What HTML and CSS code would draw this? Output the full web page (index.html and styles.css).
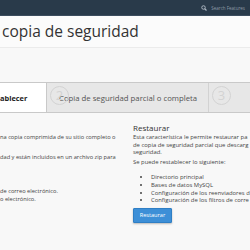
FILE: index.html
```html
<!DOCTYPE html>
<html lang="es">

<head>
    <title>Copia de seguridad</title>
    <meta charset="UTF-8">
    <link rel="stylesheet" href="styles.css">
</head>

<body>
    <div class="cp-top">
        <div class="cp-search">
            <svg width="6" height="6" viewBox="0 0 12 12">
                <circle cx="5" cy="5" r="3.5" fill="none" stroke="#a9b4bf" stroke-width="2" />
                <line x1="7.5" y1="7.5" x2="11" y2="11" stroke="#a9b4bf" stroke-width="2.4" />
            </svg>
            <span>Search Features</span>
        </div>
    </div>

    <div class="cp-title">
        <h1>copia de seguridad</h1>
    </div>

    <div class="cp-steps">
        <div class="cp-step cp-step-active">ablecer</div>
        <div class="cp-step cp-step-2">
            <span class="cp-num">2</span>
            Copia de seguridad parcial o completa
        </div>
        <div class="cp-step cp-step-3">
            <span class="cp-num">3</span>
        </div>
    </div>

    <div class="cp-content">
        <div class="cp-col cp-left">
            <p class="cp-l1">na copia comprimida de su sitio completo o</p>
            <p class="cp-l2">dad y están incluidos en un archivo zip para</p>
            <p class="cp-l3">de correo electrónico.<br>o electrónico.</p>
        </div>
        <div class="cp-col cp-right">
            <h2>Restaurar</h2>
            <p>Esta característica le permite restaurar pa<br>de copia de seguridad parcial que descarg<br>seguridad.</p>
            <p>Se puede restablecer lo siguiente:</p>
            <ul>
                <li>Directorio principal</li>
                <li>Bases de datos MySQL</li>
                <li>Configuración de los reenviadores d</li>
                <li>Configuración de los filtros de corre</li>
            </ul>
            <button class="cp-btn">Restaurar</button>
        </div>
    </div>
</body>

</html>
```

FILE: styles.css
```css
* {
    box-sizing: border-box;
    font-family: 'Open Sans', sans-serif;
}

body {
    margin: 0;
    width: 250px;
    height: 250px;
    overflow: hidden;
    background-color: #f8f8f8;
    color: #333333;
}

.cp-top {
    height: 16px;
    background-color: #293a4a;
    border-bottom: 1px solid #3c4d5e;
    display: flex;
    justify-content: flex-end;
    align-items: center;
    padding-right: 5px;
}

.cp-search {
    display: flex;
    align-items: center;
    gap: 4px;
    font-size: 4.5px;
    color: #8d9aa7;
}

.cp-title {
    height: 32px;
    border-bottom: 1px solid #ebebeb;
    background-color: #fbfbfb;
    padding-left: 2px;
}

.cp-title h1 {
    margin: 0;
    font-size: 15.5px;
    font-weight: normal;
    line-height: 30px;
    color: #333333;
}

.cp-steps {
    margin-top: 34px;
    height: 31px;
    display: flex;
    border-top: 1px solid #c9c9c9;
    border-bottom: 1px solid #c9c9c9;
    background-color: #e7e7e7;
}

.cp-step {
    position: relative;
    display: flex;
    align-items: center;
    font-size: 7.75px;
    color: #555555;
    white-space: nowrap;
    overflow: hidden;
}

.cp-step-active {
    width: 47px;
    background-color: #ffffff;
    border-right: 1px solid #c9c9c9;
    font-weight: bold;
    font-size: 7.4px;
    color: #222222;
}

.cp-step-2 {
    width: 162px;
    padding-left: 12px;
    border-right: 1px solid #d2d2d2;
}

.cp-step-3 {
    flex: 1;
}

.cp-num {
    position: absolute;
    top: 3px;
    left: 3px;
    width: 19px;
    height: 19px;
    border: 1px solid #d3d3d3;
    border-radius: 50%;
    color: #d3d3d3;
    font-size: 13px;
    line-height: 17px;
    text-align: center;
}

.cp-content {
    display: flex;
    gap: 4px;
    font-size: 5.9px;
    line-height: 7.6px;
    color: #444444;
}

.cp-col p {
    margin: 0;
    white-space: nowrap;
}

.cp-left {
    width: 129px;
    flex-shrink: 0;
    font-size: 5.7px;
    line-height: 7.5px;
}

.cp-left p.cp-l1 {
    margin-top: 21px;
}

.cp-left p.cp-l2 {
    margin-top: 12px;
}

.cp-left p.cp-l3 {
    margin-top: 27px;
}

.cp-right {
    flex: 1;
    min-width: 0;
    white-space: nowrap;
}

.cp-right h2 {
    margin: 10px 0 1px;
    font-size: 8px;
    font-weight: normal;
    line-height: 10px;
    color: #333333;
}

.cp-right p + p {
    margin-top: 2px;
}

.cp-right ul {
    margin: 8px 0 3px;
    padding-left: 18px;
}

.cp-btn {
    width: 39px;
    height: 15px;
    padding: 0;
    border: 1px solid #2f7fc5;
    border-radius: 1px;
    background-color: #3d8fd7;
    color: #ffffff;
    font-size: 5.6px;
    box-shadow: 0 1px 2px rgba(0, 0, 0, 0.25);
}
```
